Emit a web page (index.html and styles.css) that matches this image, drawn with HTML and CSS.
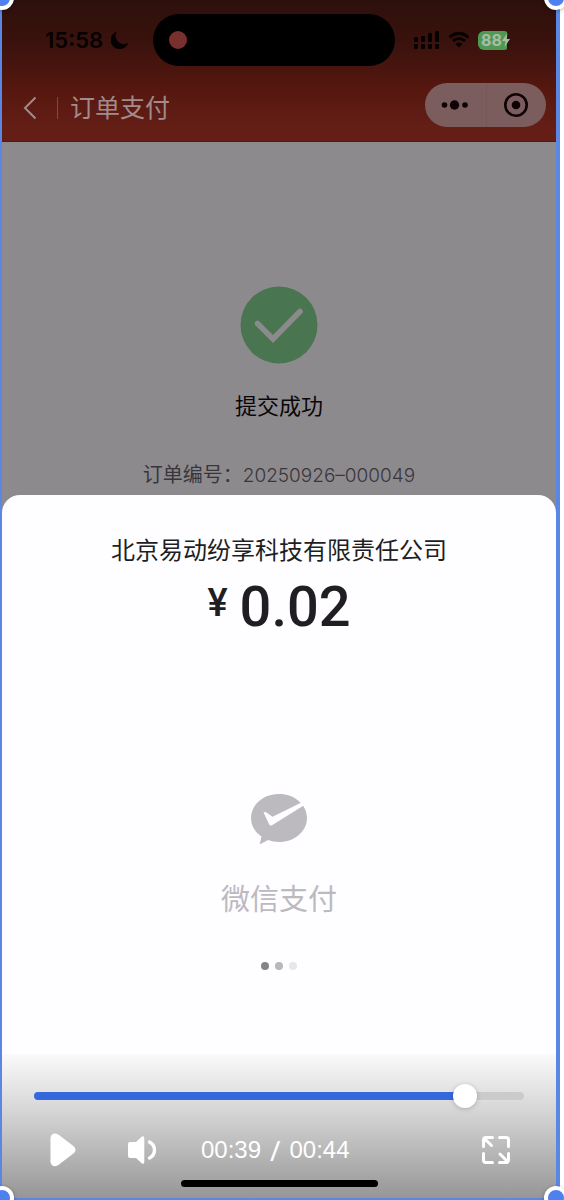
FILE: index.html
```
<!DOCTYPE html>
<html lang="zh-CN">
<head>
<meta charset="utf-8">
<meta name="viewport" content="width=device-width, initial-scale=1">
<title>订单支付</title>
<link rel="stylesheet" href="styles.css">
</head>
<body>
<div class="selection">
  <header class="top">
    <div class="status">
      <time class="clock">15:58</time>
      <svg class="moon" width="18" height="18" viewBox="0 0 18 18" aria-hidden="true"><path d="M6 0.500A9 9 0 1 0 17.300 11.500A8 8 0 0 1 6 0.500Z" fill="#060202"/></svg>
      <div class="island"><span class="rec"></span></div>
      <svg class="signal" width="26" height="18" viewBox="0 0 26 18" fill="#060202" aria-hidden="true"><rect x="0" y="6" width="4" height="5" rx="1"/><rect x="7" y="5" width="4" height="6" rx="1"/><rect x="14" y="2" width="4" height="9" rx="1"/><rect x="21" y="0" width="4" height="11" rx="1"/><rect x="0" y="13" width="4" height="5" rx="1"/><rect x="7" y="13" width="4" height="5" rx="1"/><rect x="14" y="13" width="4" height="5" rx="1"/><rect x="21" y="13" width="4" height="5" rx="1"/></svg>
      <svg class="wifi" width="22" height="18" viewBox="0 0 22 18" aria-hidden="true"><path d="M1.500 6.300Q11 -1.500 20.500 6.300M5 10Q11 5 17 10" fill="none" stroke="#060202" stroke-width="3"/><path d="M7.500 13Q11 10.200 14.500 13L11 16.500Z" fill="#060202"/></svg>
      <div class="battery"><span>88</span><svg width="8" height="14" viewBox="0 0 8 14" aria-hidden="true"><path d="M5.500 0L0 8H3.500L2.500 14L8 6H4.500Z" fill="#a9bba9"/></svg></div>
    </div>
    <nav class="nav">
      <button class="back" aria-label="返回"><svg width="14" height="24" viewBox="0 0 14 24"><path d="M12.500 1.500L2 12L12.500 22.500" fill="none" stroke="#a18b8c" stroke-width="2"/></svg></button>
      <span class="rule"></span>
      <h1 class="title">订单支付</h1>
      <div class="capsule">
        <button aria-label="更多"><svg width="28" height="10" viewBox="0 0 28 10" fill="#0e0204"><circle cx="3.500" cy="5" r="2.800"/><circle cx="13.500" cy="5" r="4.700"/><circle cx="24" cy="5" r="2.800"/></svg></button>
        <button aria-label="关闭"><svg width="24" height="24" viewBox="0 0 24 24"><circle cx="12" cy="12" r="10.700" fill="none" stroke="#0e0204" stroke-width="2.600"/><circle cx="12" cy="12" r="4.300" fill="#0e0204"/></svg></button>
      </div>
    </nav>
  </header>

  <main class="result">
    <svg class="tick" width="78" height="78" viewBox="0 0 78 78" aria-hidden="true"><circle cx="39" cy="39" r="38.500" fill="#497550"/><path d="M17.500 37.500L33 53L60 25.500" fill="none" stroke="#8d8a8d" stroke-width="5.500" stroke-linecap="round" stroke-linejoin="miter"/></svg>
    <h2 class="done">提交成功</h2>
    <p class="order">订单编号：<span class="number">20250926–000049</span></p>
  </main>

  <section class="sheet">
    <p class="company">北京易动纷享科技有限责任公司</p>
    <p class="amount"><span class="yen">¥</span><span>0.02</span></p>
    <svg class="wxpay" width="58" height="52" viewBox="0 0 58 52" aria-hidden="true"><path d="M29 1C44.500 1 57 11.500 57 25S44.500 49 29 49Q23 49 18 47L10.500 51Q9.500 51.500 10 50L11.500 43.500C5 39 1 32.500 1 25C1 11.500 13.500 1 29 1Z" fill="#bcbabf"/><path d="M13.500 19.500Q15 18.500 16.500 19.500L22.500 23.800L51 9.800Q53 9.500 54.500 12L22 32.300Q20 33.200 19 31Z" fill="#fefdff"/></svg>
    <p class="brand">微信支付</p>
    <div class="dots"><i></i><i></i><i></i></div>
  </section>

  <div class="controls">
    <input class="seek" type="range" min="0" max="44" step="any" value="39.560" aria-label="播放进度">
    <div class="buttons">
      <button aria-label="播放"><svg width="26" height="34" viewBox="0 0 26 34"><path d="M0.500 5Q1 0.500 5 0.500Q7 0.500 9 2L24 13.500Q27 17 24 20L9 31.500Q7 33.300 5 33.300Q1 33 0.500 29Z" fill="#fff"/></svg></button>
      <button class="volume" aria-label="音量"><svg width="29" height="28" viewBox="0 0 29 28"><path d="M2 6H8L14 0.500Q16.300 -0.500 16.300 2V26Q16.300 28.500 14 27.500L8 22H2Q0 22 0 20V8Q0 6 2 6Z" fill="#fff"/><path d="M21.500 6Q26.500 8.500 26.500 14T21.500 22" fill="none" stroke="#fff" stroke-width="3.400" stroke-linecap="round"/></svg></button>
      <p class="time"><span>00:39</span><span class="slash">/</span><span>00:44</span></p>
      <button class="full" aria-label="全屏"><svg width="28" height="28" viewBox="0 0 28 28" fill="none" stroke="#fff" stroke-width="3" stroke-linecap="round" stroke-linejoin="round"><path d="M10.500 1.500H4Q1.500 1.500 1.500 4V10.500M3 3L9.500 9.500M17.500 1.500H24Q26.500 1.500 26.500 4V10.500M1.500 17.500V24Q1.500 26.500 4 26.500H10.500M17.500 26.500H24Q26.500 26.500 26.500 24V17.500M18 18L25 25"/></svg></button>
    </div>
    <span class="home"></span>
  </div>

  <span class="handle top-left"></span>
  <span class="handle top-right"></span>
  <span class="handle bottom-left"></span>
  <span class="handle bottom-right"></span>
</div>
</body>
</html>
```
FILE: styles.css
```
* { box-sizing: border-box; }
body {
  margin: 0;
  padding-right: 4px;
  overflow: hidden;
  background: #fff;
  font-family: Inter, "Noto Sans CJK SC", sans-serif;
}
h1, h2, p { margin: 0; font-weight: 400; }
button { display: flex; padding: 0; border: 0; background: none; }
svg { display: block; flex: none; }

.selection {
  position: relative;
  display: flex;
  flex-direction: column;
  min-height: 100vh;
  border: solid #5a86e4;
  border-width: 0 4px 2px 2px;
  background: #8d8a8d;
}

.top {
  height: 142px;
  border-bottom: 1px solid #511a15;
  background: linear-gradient(#2d100c, #3a120d 30%, #54170f 62%, #641e16 90%);
}
.status {
  display: flex;
  align-items: center;
  height: 80px;
  padding: 0 46px 0 43px;
}
.clock { color: #060202; font-size: 22px; font-weight: 600; }
.moon { margin-left: 8px; }
.island {
  display: flex;
  align-items: center;
  width: 242px;
  height: 52px;
  margin: 0 auto 0 24px;
  padding-left: 16px;
  border-radius: 26px;
  background: #000;
}
.rec { width: 18px; height: 18px; border-radius: 50%; background: #78302e; }
.wifi { margin: 0 8px; }
.battery {
  display: flex;
  align-items: center;
  height: 19px;
  width: 32px;
  padding-left: 3px;
  border-radius: 6px;
  background: linear-gradient(90deg, #4f9a52 29px, #35120e 29px);
  color: #a9bba9;
  font-size: 16px;
  font-weight: 700;
}
.nav { display: flex; align-items: center; height: 53px; padding: 3px 10px 0 21px; }
.rule { width: 1px; height: 22px; margin: 0 12px 0 20px; background: #7e4a45; }
.title { color: #a18b8c; font-size: 25px; line-height: 36px; }
.capsule {
  display: grid;
  align-self: flex-start;
  grid-template-columns: 1fr 1fr;
  width: 121px;
  height: 44px;
  margin-left: auto;
  border-radius: 22px;
  background: #7c5d5e;
}
.capsule button { align-items: center; justify-content: center; }
.capsule button + button { border-left: 1px solid #765657; }

.result {
  display: flex;
  flex-direction: column;
  align-items: center;
  padding-top: 144px;
}
.done { margin-top: 26px; color: #080708; font-size: 22px; line-height: 32px; }
.order { margin-top: 38px; padding-bottom: 4px; color: #38363c; font-size: 20px; line-height: 30px; }
.number { font-size: 19px; font-weight: 300; }

.sheet {
  display: flex;
  flex: 1;
  flex-direction: column;
  align-items: center;
  padding: 38px 20px 200px;
  border-radius: 18px 18px 0 0;
  background: #fefdff;
  color: #201e23;
}
.company { font-size: 24px; line-height: 36px; }
.amount {
  display: flex;
  gap: 12px;
  margin-top: 4px;
  font-family: Roboto, sans-serif;
  font-size: 56px;
  font-weight: 500;
  line-height: 68px;
}
.yen { font-size: 38px; line-height: 60px; }
.wxpay { margin-top: 152px; }
.brand { margin-top: 35px; color: #bcbabf; font-size: 29px; line-height: 40px; }
.dots { display: flex; gap: 6px; margin-top: 42px; }
.dots i { width: 8px; height: 8px; border-radius: 50%; background: #858387; }
.dots i:nth-child(2) { background: #b9b7bb; }
.dots i:nth-child(3) { background: #e7e6e9; }

.controls {
  position: absolute;
  right: 0;
  bottom: 0;
  left: 0;
  display: flex;
  flex-direction: column;
  padding: 30px 32px 11px;
  background: linear-gradient(#fafafa, #d5d5d5 40%, #969696);
}
.seek {
  width: 100%;
  height: 24px;
  margin: 0;
  appearance: none;
  background: none;
}
.seek::-webkit-slider-runnable-track {
  height: 8px;
  border-radius: 4px;
  background: linear-gradient(90deg, #3468dc 88%, #cbcbcb 88%);
}
.seek::-webkit-slider-thumb {
  width: 24px;
  height: 24px;
  margin-top: -8px;
  appearance: none;
  border-radius: 50%;
  background: #fff;
  box-shadow: 0 1px 5px #0003;
}
.buttons { display: flex; align-items: center; height: 34px; margin-top: 25px; padding: 0 14px 0 16px; }
.volume { margin-left: 52px; }
.time {
  display: flex;
  gap: 9px;
  margin-left: 44px;
  color: #fff;
  font: 24px/34px "Liberation Sans", Arial, sans-serif;
}
.slash { font-family: "Noto Sans", sans-serif; font-size: 28px; }
.full { margin-left: auto; }
.home { align-self: center; width: 197px; height: 7px; margin-top: 13px; border-radius: 4px; background: #000; }

/* Resize handles centred on the corners of the selected area */
.handle {
  position: absolute;
  width: 24px;
  height: 24px;
  border: 4px solid #fff;
  border-radius: 50%;
  background: #4f80ef;
  box-shadow: 0 1px 4px #0004;
}
.top-left { top: -14px; left: -12px; }
.top-right { top: -14px; right: -12px; }
.bottom-left { bottom: -12px; left: -12px; }
.bottom-right { right: -12px; bottom: -12px; }
```
